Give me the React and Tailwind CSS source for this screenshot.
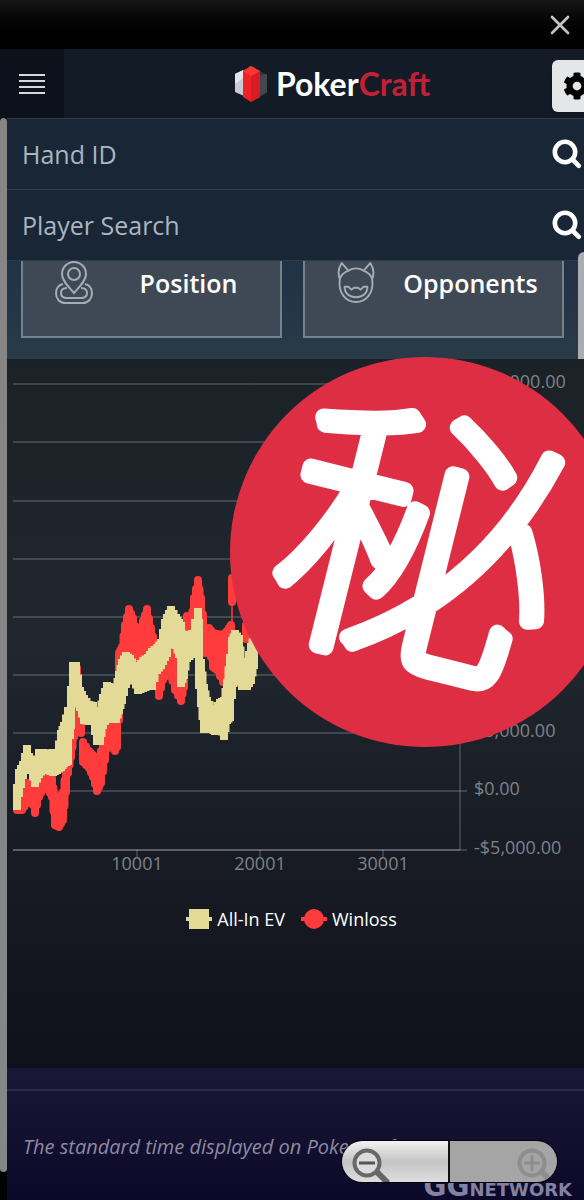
import { X } from 'lucide-react'
import { FaCog } from 'react-icons/fa'

// each sample is [x, highest, lowest] for one bucket of hands
const EV = [
  [10, 425, 451], [12, 410, 438], [16, 402, 420], [20, 386, 410], [24, 402, 415],
  [28, 403, 428], [32, 390, 419], [36, 390, 414], [41, 391, 415], [46, 390, 417],
  [50, 392, 415], [54, 371, 412], [57, 363, 408], [61, 348, 406], [63, 348, 380],
  [64, 327, 370], [66, 303, 339], [69, 303, 345], [73, 328, 352], [77, 336, 365],
  [82, 342, 366], [86, 343, 366], [90, 357, 386], [93, 348, 386], [96, 335, 370],
  [100, 323, 362], [105, 325, 364], [109, 326, 364], [112, 312, 355], [115, 300, 345],
  [119, 293, 329], [123, 296, 322], [127, 303, 324], [131, 304, 335], [136, 298, 333],
  [141, 295, 331], [145, 289, 331], [150, 285, 315], [154, 280, 310], [158, 260, 302],
  [160, 255, 298], [164, 247, 281], [169, 255, 290], [172, 260, 299], [174, 263, 328],
  [177, 280, 320], [180, 273, 303], [185, 271, 299], [191, 249, 299], [192, 260, 330],
  [194, 300, 348], [197, 325, 374], [200, 338, 370], [205, 346, 374], [208, 346, 376],
  [213, 340, 372], [217, 338, 381], [220, 320, 365], [223, 295, 362], [225, 278, 340],
  [228, 271, 316], [232, 276, 322], [235, 299, 331], [240, 300, 331], [244, 284, 325],
  [247, 275, 310],
]

const WINLOSS = [
  [10, 442, 455], [15, 429, 455], [20, 420, 448], [24, 422, 442], [28, 432, 458],
  [32, 419, 442], [36, 414, 434], [41, 414, 434], [45, 415, 442], [48, 435, 470],
  [52, 435, 472], [56, 429, 465], [59, 406, 437], [61, 388, 418], [64, 340, 402],
  [67, 335, 382], [70, 305, 365], [74, 358, 378], [76, 379, 407], [82, 388, 413],
  [86, 392, 422], [90, 402, 436], [94, 388, 428], [98, 368, 405], [103, 352, 382],
  [108, 362, 396], [110, 335, 392], [112, 290, 365], [115, 284, 305], [118, 262, 302],
  [122, 246, 288], [126, 255, 295], [131, 272, 302], [136, 258, 302], [140, 246, 292],
  [144, 265, 298], [148, 282, 302], [152, 302, 341], [156, 298, 325], [163, 280, 317],
  [168, 295, 335], [174, 315, 346], [177, 318, 332], [180, 253, 275], [184, 262, 275],
  [187, 235, 268], [191, 217, 255], [194, 235, 285], [198, 268, 298], [202, 265, 292],
  [206, 270, 312], [210, 271, 315], [216, 272, 327], [220, 268, 325], [224, 262, 302],
  [225, 215, 247], [239, 262, 284],
]

const GRID = [
  [25, '$30,000.00'], [83, '$25,000.00'], [142, '$20,000.00'], [200, '$15,000.00'],
  [258, '$10,000.00'], [316, '$7,500.00'], [374, '$5,000.00'], [432, '$0.00'], [491, '-$5,000.00'],
]

const TICKS = [[130, '10001'], [253, '20001'], [376, '30001']]

// adds the midpoint between neighbouring samples so the band has no gaps
const densify = (samples) =>
  samples.flatMap((cur, i) => {
    const next = samples[i + 1]
    if (!next || next[0] - cur[0] < 3 || next[0] - cur[0] > 8) return [cur]
    return [cur, cur.map((v, k) => (v + next[k]) / 2)]
  })

function Logo() {
  return (
    <a href="#" aria-label="PokerCraft" className="flex items-center gap-2 font-['Lato'] text-[32px] leading-9 font-bold">
      <svg viewBox="0 0 34 38" className="w-[34px] h-[38px]" aria-hidden="true">
        <path d="M1 9 10 5v26L1 27z" fill="#c9cbd0" />
        <path d="m1 9 8-4v8l-8 6z" fill="#e4e5e8" />
        <path d="m24 5 9 5v18l-9 5z" fill="#33363d" />
        <path d="m26 10 7-1v18l-7 4z" fill="#44474d" />
        <path d="M9 6 17 1l9 5v26l-9 5-8-5z" fill="#ed2227" />
        <path d="m17 11 9-5v26l-9 5z" fill="#d81c24" />
        <path d="m9 6 8-5 9 5-9 5z" fill="#fb3735" />
      </svg>
      <span>
        <span className="text-white">Poker</span>
        <span className="text-[#c22135]">Craft</span>
      </span>
    </a>
  )
}

function SearchRow({ id, label }) {
  return (
    <form className="flex items-center h-[71px] pl-[15px] pr-[2px] bg-[#182636] border-t border-[#2c3d4e]" onSubmit={(e) => e.preventDefault()}>
      <input
        id={id}
        type="text"
        aria-label={label}
        placeholder={label}
        className="flex-1 min-w-0 bg-transparent text-[25px] leading-8 text-white placeholder:text-[#aab5c1] focus:outline-none"
      />
      <button type="submit" aria-label={`Search ${label}`} className="text-white">
        <svg viewBox="0 0 30 30" className="w-[30px] h-[30px]" fill="none" stroke="currentColor" strokeLinecap="round" aria-hidden="true">
          <circle cx="13" cy="13" r="10.2" strokeWidth="4.6" />
          <path d="m20.5 20.5 6.300 6.300" strokeWidth="4.600" />
        </svg>
      </button>
    </form>
  )
}

function PinIcon() {
  return (
    <svg viewBox="0 0 38 43" className="w-[38px] h-[43px]" fill="none" stroke="#a4adb6" strokeWidth="2" aria-hidden="true">
      <path d="M19 32C14 26 7 20 7 13a12 12 0 0 1 24 0c0 7-7 13-12 19z" />
      <circle cx="19" cy="13" r="6" />
      <path d="M8 23c-4 1-7 4-7 9 0 6 4 10 9 10h18c5 0 9-4 9-10 0-5-3-8-7-9" />
      <path d="M12 27c-4 0-6 2-6 5s2 5 6 5h14c4 0 6-2 6-5s-2-5-6-5" />
    </svg>
  )
}

function DevilIcon() {
  return (
    <svg viewBox="0 0 40 43" className="w-[38px] h-[43px]" fill="none" stroke="#a4adb6" strokeWidth="2" strokeLinejoin="round" aria-hidden="true">
      <path d="M12 9C17 6 23 6 28 9L35 1c4 6 4 12 2 17 2 14-6 24-17 24S1 32 3 18C1 13 1 7 5 1z" />
      <path d="M12 9c-5 2-8 5-9 9M28 9c5 2 8 5 9 9" />
      <path d="M8 26h4l3 3 3-2h4l3 2 3-3h4c0 7-5 11-12 11S8 33 8 26z" />
    </svg>
  )
}

function Card({ icon, title }) {
  return (
    <button className="flex flex-1 items-start h-[77px] pl-8 bg-[#3e4955] border-2 border-t-0 border-[#76818c]">
      {icon}
      <span className="flex-1 pt-1 pl-1 text-center text-[25px] leading-9 font-semibold text-white">{title}</span>
    </button>
  )
}

function Chart() {
  return (
    <svg viewBox="0 0 577 530" className="block w-full" role="img" aria-label="All-In EV and Winloss by hand">
      <g stroke="#ffffff" strokeOpacity="0.22" strokeWidth="1.4">
        {GRID.map(([y]) => <line key={y} x1="6" x2="460" y1={y} y2={y} />)}
        <line x1="453" x2="453" y1="25" y2="491" />
        {TICKS.map(([x]) => <line key={x} x1={x} x2={x} y1="491" y2="498" />)}
        <line x1="6" x2="453" y1="491" y2="491" />
      </g>
      <g fill="#7f8288" fontSize="18">
        {GRID.map(([y, label]) => <text key={label} x="467" y={y + 4}>{label}</text>)}
        {TICKS.map(([x, label]) => <text key={label} x={x} y="511" textAnchor="middle">{label}</text>)}
      </g>
      <g stroke="#ff3b3b" strokeWidth="8" strokeLinecap="round">
        {densify(WINLOSS).map(([x, hi, lo]) => <line key={`${x}-${hi}`} x1={x} x2={x} y1={hi + 4} y2={lo - 4} />)}
        <line x1="225" x2="225" y1="240" y2="268" strokeWidth="1.5" />
      </g>
      <g stroke="#e4da98" strokeWidth="8">
        {densify(EV).map(([x, hi, lo]) => <line key={`${x}-${hi}`} x1={x} x2={x} y1={hi} y2={lo} />)}
      </g>
    </svg>
  )
}

function Legend() {
  return (
    <div className="flex items-center justify-center gap-4 text-lg leading-6 text-white mt-[18px] pr-2">
      <span className="flex items-center gap-[5px]">
        <svg viewBox="0 0 26 22" className="w-[26px] h-[22px]" fill="#e4da98" aria-hidden="true">
          <path d="M0 9h26v4H0zM3 1h20v20H3z" />
        </svg>
        All-In EV
      </span>
      <span className="flex items-center gap-[5px]">
        <svg viewBox="0 0 26 22" className="w-[26px] h-[22px]" fill="#ff3b3b" aria-hidden="true">
          <path d="M0 9h26v4H0z" />
          <circle cx="13" cy="11" r="10" />
        </svg>
        Winloss
      </span>
    </div>
  )
}

function Stamp() {
  return (
    <svg viewBox="0 0 390 390" className="absolute -top-[2px] -right-9 w-[390px] h-[390px]" role="img" aria-label="秘">
      <circle cx="195" cy="195" r="195" fill="#de2e43" />
      <text
        x="188"
        y="292"
        textAnchor="middle"
        transform="rotate(14 195 195)"
        fontSize="278"
        fontWeight="100"
        fill="#fff"
        stroke="#fff"
        strokeWidth="17"
        strokeLinejoin="round"
        className="font-['Noto_Sans_CJK_JP',sans-serif]"
      >
        秘
      </text>
    </svg>
  )
}

function ZoomControls() {
  return (
    <div className="absolute right-[26px] bottom-[17px] flex w-[217px] h-[43px] rounded-full overflow-hidden border border-black">
      <button aria-label="Zoom out" className="w-1/2 pl-2 pt-1 bg-linear-to-b from-[#f2f2f2] via-[#c4c4c4] to-[#dedede] border-r-2 border-[#111]">
        <svg viewBox="0 0 42 38" className="w-[42px] h-[38px]" fill="none" aria-hidden="true">
          <path d="m25 25 13 13" stroke="#666" strokeWidth="6" />
          <circle cx="17" cy="18" r="12.5" fill="#dcdcdc" stroke="#686868" strokeWidth="4" />
          <path d="M9 18h16" stroke="#555" strokeWidth="3" />
        </svg>
      </button>
      <button aria-label="Zoom in" className="flex w-1/2 justify-end pt-1 bg-[#a5a5a5]">
        <svg viewBox="0 0 42 38" className="w-[42px] h-[38px]" fill="none" aria-hidden="true">
          <path d="m25 25 8 8" stroke="#8e8e8e" strokeWidth="6" />
          <circle cx="17" cy="18" r="12.5" stroke="#8e8e8e" strokeWidth="4" />
          <path d="M9 18h16M17 10v16" stroke="#8e8e8e" strokeWidth="3" />
        </svg>
      </button>
    </div>
  )
}

export default function App() {
  return (
    <div className="relative flex flex-col h-screen overflow-hidden bg-black font-['Open_Sans','Noto_Sans',sans-serif]">
      <div className="flex shrink-0 items-center justify-end h-[49px] pr-2 bg-linear-to-b from-[#161616] to-black">
        <button aria-label="Close" className="text-[#c4c4c4]">
          <X className="w-8 h-8" strokeWidth={2} />
        </button>
      </div>

      <header className="flex shrink-0 items-center h-[69px] bg-[#121b26]">
        <button aria-label="Menu" className="flex items-center justify-center w-16 h-full bg-[#0b121b]">
          <svg viewBox="0 0 26 20" className="w-[26px] h-5" stroke="#d5d9dd" strokeWidth="2" aria-hidden="true">
            <path d="M0 1h26M0 7h26M0 13h26M0 19h26" />
          </svg>
        </button>
        <div className="flex flex-1 justify-center pl-12">
          <Logo />
        </div>
        <button aria-label="Settings" className="flex items-center w-[52px] h-[52px] mt-1 -mr-5 pl-[11px] rounded-md bg-[#e4e6e8] text-black shadow-lg">
          <FaCog className="w-[28px] h-[28px]" />
        </button>
      </header>

      <div className="flex flex-1 min-h-0">
        <div className="w-[7px] mb-7 rounded-full bg-[#868686]" />
        <main className="flex flex-col flex-1 min-w-0">
          <SearchRow id="hand-id" label="Hand ID" />
          <SearchRow id="player" label="Player Search" />

          <div className="relative flex flex-col flex-1">
            <div className="flex gap-[21px] pl-[14px] pr-5 pb-[21px] bg-linear-to-b from-[#203245] to-[#293a48] border-t border-[#2c3d4c]">
              <Card icon={<PinIcon />} title="Position" />
              <Card icon={<DevilIcon />} title="Opponents" />
            </div>
            <div className="absolute top-0 -mt-2 right-0 w-[6px] h-[300px] rounded-tl-md bg-[#a9adb2]" />

            <section className="relative flex-1 bg-linear-to-b from-[#1a2127] via-[#20272e] via-40% to-[#10101b]">
              <Chart />
              <Legend />
              <Stamp />
            </section>

            <footer className="flex flex-col h-[132px] pt-[21px] bg-linear-to-b from-[#1a1736] to-[#0c0829]">
              <p className="border-t-2 border-[#2c2a48] pt-[42px] pl-4 text-xl leading-7 italic whitespace-nowrap text-[#8d8ba0]">
                The standard time displayed on PokerCraft
              </p>
              <div className="flex items-baseline justify-end pr-3 mt-2 font-['DejaVu_Sans'] font-bold leading-9 text-[#8482a0]">
                <span className="text-[28px]">GG</span>
                <span className="text-lg">NETWORK</span>
              </div>
            </footer>
          </div>
        </main>
      </div>
      <ZoomControls />
    </div>
  )
}
